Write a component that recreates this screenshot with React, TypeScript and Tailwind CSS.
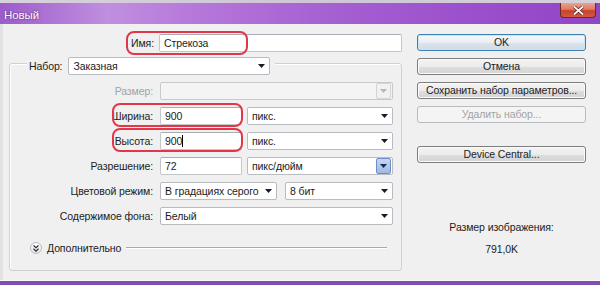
import React from "react";

function Arrow({ color = "#1a1a2a" }: { color?: string }) {
  return (
    <svg width="7" height="4" viewBox="0 0 7 4">
      <path d="M0 0 L7 0 L3.5 4 Z" fill={color} />
    </svg>
  );
}

function Combo({
  className,
  text,
  disabled,
  blue,
  boxed,
}: {
  className: string;
  text?: string;
  disabled?: boolean;
  blue?: boolean;
  boxed?: boolean;
}) {
  return (
    <div
      className={
        "h-[18px] flex items-center border rounded-[2px] " +
        (disabled ? "bg-[#f4f4f4] border-[#c7c9cc] " : "bg-white border-[#b8bbc0] ") +
        className
      }
    >
      <span className="flex-1 pl-[4px] leading-none whitespace-nowrap">{text}</span>
      {blue ? (
        <div className="w-[15px] h-[16px] mr-[1px] flex items-center justify-center border border-[#6b8fc8] rounded-[2px] bg-[linear-gradient(#c5d6f4,#9fb8e6)]">
          <Arrow color="#1e2a52" />
        </div>
      ) : boxed ? (
        <div className="w-[15px] h-[16px] mr-[1px] flex items-center justify-center border border-[#d2d4d7] rounded-[2px] bg-[#f1f1f1]">
          <Arrow color="#b5b7bb" />
        </div>
      ) : (
        <div className="w-[16px] shrink-0 flex items-center justify-center">
          <Arrow />
        </div>
      )}
    </div>
  );
}

function Input({ className, children }: { className: string; children?: React.ReactNode }) {
  return (
    <div
      className={
        "h-[18px] flex items-center bg-white border border-[#c3c6cb] border-t-[#a9acb2] rounded-[2px] pl-[4px] leading-none " +
        className
      }
    >
      {children}
    </div>
  );
}

function Btn({ children, ok, disabled }: { children: React.ReactNode; ok?: boolean; disabled?: boolean }) {
  return (
    <div
      className={
        "w-[169px] h-[17px] flex items-center justify-center rounded-[3px] border leading-none whitespace-nowrap " +
        (disabled
          ? "border-[#b8bcc0] bg-[#f4f4f4] text-[#a3a3a3]"
          : ok
          ? "border-[#3c7fb1] bg-[linear-gradient(#f4f8fc_0%,#e9eef4_50%,#dbe3ea_51%,#d2dbe3_100%)] shadow-[inset_0_0_0_1px_#c9e6f7]"
          : "border-[#7d7d7d] bg-[linear-gradient(#f3f3f3_0%,#ececec_50%,#dedede_51%,#d4d4d4_100%)] shadow-[inset_0_0_0_1px_#fbfbfb]")
      }
    >
      {children}
    </div>
  );
}

function RedBox({ className }: { className: string }) {
  return <div className={"absolute border-2 border-[#e0384a] rounded-[8px] pointer-events-none " + className} />;
}

export default function App() {
  return (
    <div className="w-[600px] h-[285px] overflow-hidden bg-[#f0f0f0] flex flex-col font-['Liberation_Sans',sans-serif] text-[10.5px] tracking-[-0.1px] text-[#1c1c1c]">
      <div className="h-[3px] bg-[linear-gradient(90deg,#d8d2dc,#cfc6d6_50%,#d6d0da)]" />
      <div className="h-[21px] flex items-start justify-between bg-[linear-gradient(90deg,#9d5ccb_0%,#c08fdf_18%,#b678da_32%,#a560d2_55%,#9a4fcb_80%,#9244c6_100%)]">
        <span className="mt-[4px] ml-[4px] text-[11.5px] text-white [text-shadow:0_0_2px_#3a1a50]">Новый</span>
        <div className="mr-[4px] w-[36px] h-[15px] flex items-center justify-center rounded-b-[4px] border border-t-0 border-[#6e2a20] bg-[linear-gradient(#eaa28e_0%,#de7a62_45%,#c7432b_55%,#d25a3c_100%)]">
          <svg width="11" height="9" viewBox="0 0 11 9">
            <path d="M1 0.5 L10 8.5 M10 0.5 L1 8.5" stroke="#5a1a12" strokeWidth="3.2" />
            <path d="M1 0.5 L10 8.5 M10 0.5 L1 8.5" stroke="#ffffff" strokeWidth="1.8" />
          </svg>
        </div>
      </div>
      <div className="flex-1 flex border-l-[3px] border-[#e2e2e2]">
        <div className="w-[407px] flex flex-col">
          <div className="relative mt-[10px] flex items-center h-[18px]">
            <span className="w-[151px] text-right leading-none">Имя:</span>
            <Input className="ml-[5px] w-[243px]">Стрекоза</Input>
            <RedBox className="left-[123px] top-[-3px] w-[122px] h-[24px]" />
          </div>
          <div className="mt-[11px] ml-[6px] w-[393px] h-[208px] border border-[#cdd1d5] rounded-[3px] shadow-[inset_1px_1px_0_#ffffff] flex flex-col">
            <div className="-mt-[7px] ml-[17px] self-start flex items-center gap-[6px] bg-[#f0f0f0] pl-[2px] pr-[5px]">
              <span className="leading-none">Набор:</span>
              <Combo className="w-[202px]" text="Заказная" />
            </div>
            <div className="mt-[7px] flex flex-col gap-[7px]">
              <div className="flex items-center h-[18px]">
                <span className="w-[143px] text-right leading-none text-[#a3a3a3]">Размер:</span>
                <Combo className="ml-[7px] w-[233px]" disabled boxed />
              </div>
              <div className="relative flex items-center h-[18px]">
                <span className="w-[143px] text-right leading-none">Ширина:</span>
                <Input className="ml-[7px] w-[82px]">900</Input>
                <Combo className="ml-[5px] w-[146px]" text="пикс." />
                <RedBox className="left-[102px] top-[-4px] w-[131px] h-[24px]" />
              </div>
              <div className="relative flex items-center h-[18px]">
                <span className="w-[143px] text-right leading-none">Высота:</span>
                <Input className="ml-[7px] w-[82px]">
                  900<span className="inline-block w-px h-[12px] bg-black" />
                </Input>
                <Combo className="ml-[5px] w-[146px]" text="пикс." />
                <RedBox className="left-[102px] top-[-4px] w-[131px] h-[24px]" />
              </div>
              <div className="flex items-center h-[18px]">
                <span className="w-[143px] text-right leading-none">Разрешение:</span>
                <Input className="ml-[7px] w-[82px]">72</Input>
                <Combo className="ml-[5px] w-[146px]" text="пикс/дюйм" blue />
              </div>
              <div className="flex items-center h-[18px]">
                <span className="w-[143px] text-right leading-none">Цветовой режим:</span>
                <Combo className="ml-[7px] w-[117px]" text="В градациях серого" />
                <Combo className="ml-[8px] w-[108px]" text="8 бит" />
              </div>
              <div className="flex items-center h-[18px]">
                <span className="w-[143px] text-right leading-none">Содержимое фона:</span>
                <Combo className="ml-[7px] w-[233px]" text="Белый" />
              </div>
            </div>
            <div className="mt-[16px] flex items-center h-[14px] ml-[20px] mr-[14px]">
              <div className="w-[12px] h-[12px] rounded-full border border-[#b9bcc0] bg-[linear-gradient(#ffffff,#e3e3e3)] flex items-center justify-center">
                <svg width="6" height="7" viewBox="0 0 6 7">
                  <path d="M0.5 0.5 L3 2.8 L5.5 0.5 M0.5 3.8 L3 6.1 L5.5 3.8" stroke="#333" strokeWidth="1.2" fill="none" />
                </svg>
              </div>
              <span className="ml-[5px] leading-none">Дополнительно</span>
              <div className="flex-1 ml-[5px] h-[2px] border-t border-[#a9a9a9] border-b border-b-white" />
            </div>
          </div>
        </div>
        <div className="ml-[7px] flex flex-col pt-[10px]">
          <div className="flex flex-col gap-[7px]">
            <Btn ok>OK</Btn>
            <Btn>Отмена</Btn>
            <Btn>Сохранить набор параметров...</Btn>
            <Btn disabled>Удалить набор...</Btn>
          </div>
          <div className="mt-[23px]">
            <Btn>Device Central...</Btn>
          </div>
          <div className="mt-[58px] w-[169px] text-center leading-[13px]">Размер изображения:</div>
          <div className="mt-[9px] w-[169px] text-center leading-[13px]">791,0K</div>
        </div>
      </div>
      <div className="h-[1px] bg-[#fafafa]" />
      <div className="h-[4px] bg-[#7e4fb0]" />
    </div>
  );
}
